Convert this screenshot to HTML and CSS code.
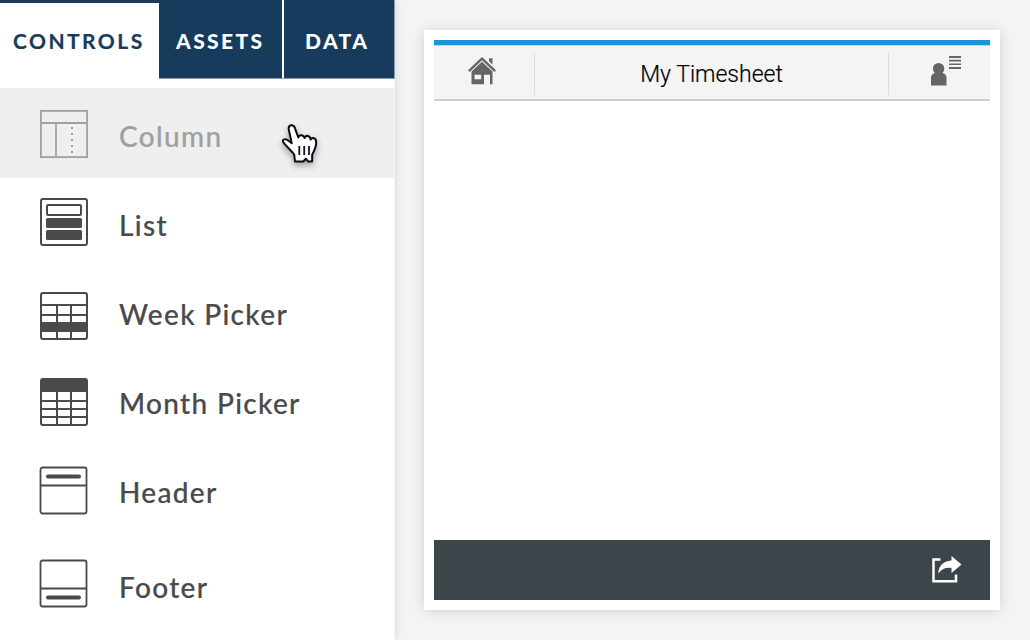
FILE: index.html
```html
<!DOCTYPE html>
<html lang="en">
<head>
<meta charset="utf-8">
<title>My Timesheet</title>
<link rel="stylesheet" href="styles.css">
</head>
<body>
<div class="app">
  <aside class="sidebar">
    <nav class="tabs">
      <a class="tab tab-controls active">CONTROLS</a>
      <a class="tab tab-assets">ASSETS</a>
      <a class="tab tab-data">DATA</a>
    </nav>
    <ul class="controls">
      <li class="control column">
        <svg class="icon" viewBox="0 0 48 48"><g fill="none" stroke="currentColor" stroke-width="1.8"><rect x="0.9" y="0.9" width="46.2" height="46.2"/><path d="M1 13H47M16 13V47"/></g><path d="M31 17h2v2h-2zM31 23h2v2h-2zM31 29h2v2h-2zM31 35h2v2h-2zM31 41h2v2h-2z" fill="currentColor"/></svg>
        <span class="label">Column</span>
      </li>
      <li class="control list">
        <svg class="icon" viewBox="0 0 48 48"><g fill="none" stroke="currentColor" stroke-width="2"><rect x="1" y="1" width="46" height="46" rx="2"/><rect x="7" y="7" width="34" height="10" rx="1"/></g><g fill="currentColor"><rect x="6" y="20" width="36" height="10" rx="1.5"/><rect x="6" y="32" width="36" height="10" rx="1.5"/></g></svg>
        <span class="label">List</span>
      </li>
      <li class="control week">
        <svg class="icon" viewBox="0 0 48 48"><g fill="none" stroke="currentColor" stroke-width="2"><rect x="1" y="1" width="46" height="46" rx="2"/><path d="M1 13H47M1 23H47M17 13V47M31 13V47"/></g><path d="M1 30H47V40H1z" fill="currentColor"/></svg>
        <span class="label">Week Picker</span>
      </li>
      <li class="control month">
        <svg class="icon" viewBox="0 0 48 48"><g fill="none" stroke="currentColor" stroke-width="2"><rect x="1" y="1" width="46" height="46" rx="2"/><path d="M1 23H47M1 31H47M1 39H47M17 13V47M31 13V47"/></g><path d="M1 1H47V14H1z" fill="currentColor"/></svg>
        <span class="label">Month Picker</span>
      </li>
      <li class="control header">
        <svg class="icon" viewBox="0 0 48 48"><g fill="none" stroke="currentColor" stroke-width="1.8"><rect x="0.5" y="1.5" width="46" height="46" rx="2"/><path d="M1 19.5H47"/><path d="M8 10.5H39" stroke-width="4" stroke-linecap="round"/></g></svg>
        <span class="label">Header</span>
      </li>
      <li class="control footer">
        <svg class="icon" viewBox="0 0 48 48"><g fill="none" stroke="currentColor" stroke-width="1.8"><rect x="0.5" y="1.5" width="46" height="46" rx="2"/><path d="M1 29.5H47"/><path d="M8 38.5H39" stroke-width="4" stroke-linecap="round"/></g></svg>
        <span class="label">Footer</span>
      </li>
    </ul>
  </aside>
  <main class="canvas">
    <section class="device">
      <header class="titlebar">
        <div class="home"><svg class="home-icon" viewBox="0 0 28 28"><g fill="#656565"><path d="M0 13.3 14 0 28 13.3 26.3 14.9 14 3.3 1.7 14.9z"/><path d="M21 1.2h3.5v6.3L21 4.2z"/><path fill-rule="evenodd" d="M3.5 14.6 14 4.8 24.5 14.6V27.3H22V17.7H16V27.3H3.5zM6.5 17.7V22.3H13.2V17.7z"/></g></svg></div>
        <h1 class="title">My Timesheet</h1>
        <div class="account"><svg class="account-icon" viewBox="0 0 30 30"><g fill="#656565"><circle cx="7.6" cy="12.6" r="5.7"/><path d="M4 17H11.5Q15.5 18 15.5 22V29.5H0V22Q0 18 4 17z"/><path d="M18 0h12v2H18zM18 3.8h12v1.7H18zM18 7.4h12v1.7H18zM18 11h12v2H18z"/></g></svg></div>
      </header>
      <div class="body"></div>
      <footer class="toolbar"><svg class="share" viewBox="0 0 30 28"><path d="M8.5 3.5H1.5V25.2H24V18.5" fill="none" stroke="#fff" stroke-width="2.5"/><path d="M19.5 0 29.5 8.5 19.5 17V12Q11 10.8 6.3 17.5Q6.5 6 19.5 4.6z" fill="#fff"/></svg></footer>
    </section>
  </main>
  <svg class="cursor" viewBox="0 0 40 44"><path d="M14 37.2 13.7 34.5C12 32 10.4 31 8 28.2L3.6 23.3Q1.2 20.8 3.2 19.6Q5.5 18.5 8 20.8L11.2 23.2 8.3 9.6Q7.6 6 10.6 5.3Q13.5 5 14.5 8.3L17.8 17.5Q18.4 14.8 21 15.2Q23.6 15.7 24.1 18Q25 15.4 27.6 16Q30 16.8 30.2 19.6Q31.2 17.5 33.5 18.2Q35.7 19 35.7 22.2C35.7 27.5 34 30.5 31.7 34.4L31.6 41.5H27.7L25.3 38.7 22.8 41.5H14.5z" fill="#fff" stroke="#0b0d12" stroke-width="2" stroke-linejoin="round"/><path d="M18.8 26V35M23.7 26V35M28.5 26V35" stroke="#111522" stroke-width="1.8"/></svg>
</div>
</body>
</html>
```
FILE: styles.css
```css
* { box-sizing: border-box; }
body { margin: 0; }
.app {
  position: relative;
  display: flex;
  width: 1030px;
  height: 640px;
  overflow: hidden;
  background: #f4f4f4;
  font-family: Lato, sans-serif;
}
.sidebar {
  position: relative;
  flex: none;
  width: 395px;
  background: #fff;
  border-right: 1px solid #f4f4f4;
  box-shadow: 0 0 9px rgba(0, 0, 0, .12);
}
.tabs { display: flex; gap: 2px; height: 79px; margin-right: -1px; border-bottom: 1px solid #8a9dae; }
.tab {
  height: 78px;
  padding-top: 28px;
  font-size: 21px;
  line-height: 26px;
  font-weight: 900;
  letter-spacing: 2.4px;
  white-space: nowrap;
  color: #fff;
  background: #163b5c;
}
.tab-controls { width: 159px; padding-left: 13px; margin-right: -2px; }
.tab-assets { width: 123px; padding-left: 17px; }
.tab-data { flex: 1; padding-left: 21px; border-right: 1px solid #8a9dae; }
.tab.active {
  height: 79px;
  padding-top: 25px;
  color: #163b5c;
  background: #fff;
  border-top: 3px solid #163b5c;
}
.tab-controls.active { font-weight: 700; letter-spacing: 2.45px; -webkit-text-stroke: .2px #163b5c; }
.controls { margin: 9px 0 0; padding: 0; list-style: none; }
.control { display: flex; gap: 31px; height: 89px; padding-left: 40px; color: #4a4a4a; }
.label {
  padding-top: 30px;
  font-size: 28px;
  line-height: 34px;
  font-weight: 500;
  letter-spacing: 1.33px;
  white-space: nowrap;
  -webkit-text-stroke: .2px currentColor;
}
.icon { width: 48px; height: 48px; overflow: visible; }
.column { height: 90px; background: #efefef; color: #a0a0a0; }
.column .label { padding-top: 31px; }
.column .icon { margin-top: 22px; }
.list .icon { margin-top: 20px; }
.week .icon { margin-top: 25px; }
.month .icon { margin-top: 22px; }
.header { height: 95px; }
.header .icon { margin-top: 21px; }
.footer .icon { margin-top: 19px; }
.canvas { flex: 1; padding: 30px 30px 30px 29px; }
.device {
  display: flex;
  flex-direction: column;
  width: 576px;
  height: 580px;
  padding: 10px;
  background: #fff;
  box-shadow: 0 1px 12px rgba(0, 0, 0, .14);
}
.titlebar {
  display: grid;
  grid-template-columns: 101px 1fr 102px;
  height: 61px;
  padding: 8px 0 4px;
  background: #f4f4f4;
  border-top: 5px solid #1995de;
  border-bottom: 2px solid #ccc;
  box-shadow: inset 0 1px #a7dcf6;
}
.home { height: 42px; padding: 4px 0 0 34px; border-right: 1px solid #ddd; }
.home-icon { display: block; width: 28px; height: 28px; }
.title {
  margin: 0;
  height: 42px;
  font: 300 23px/44px Roboto, sans-serif;
  letter-spacing: 0;
  text-align: center;
  color: #000;
  -webkit-text-stroke: .2px #000;
}
.account { height: 42px; padding: 3px 0 0 42px; border-left: 1px solid #ddd; }
.account-icon { display: block; width: 30px; height: 30px; }
.body { flex: 1; }
.toolbar {
  display: flex;
  justify-content: flex-end;
  height: 60px;
  padding: 16px 28px 0 0;
  background: #3c4549;
}
.share { width: 30px; height: 28px; }
.cursor {
  position: absolute;
  left: 280px;
  top: 120px;
  width: 41px;
  height: 44px;
  overflow: visible;
  filter: drop-shadow(0 3px 3px rgba(0, 0, 0, .35));
}
```
